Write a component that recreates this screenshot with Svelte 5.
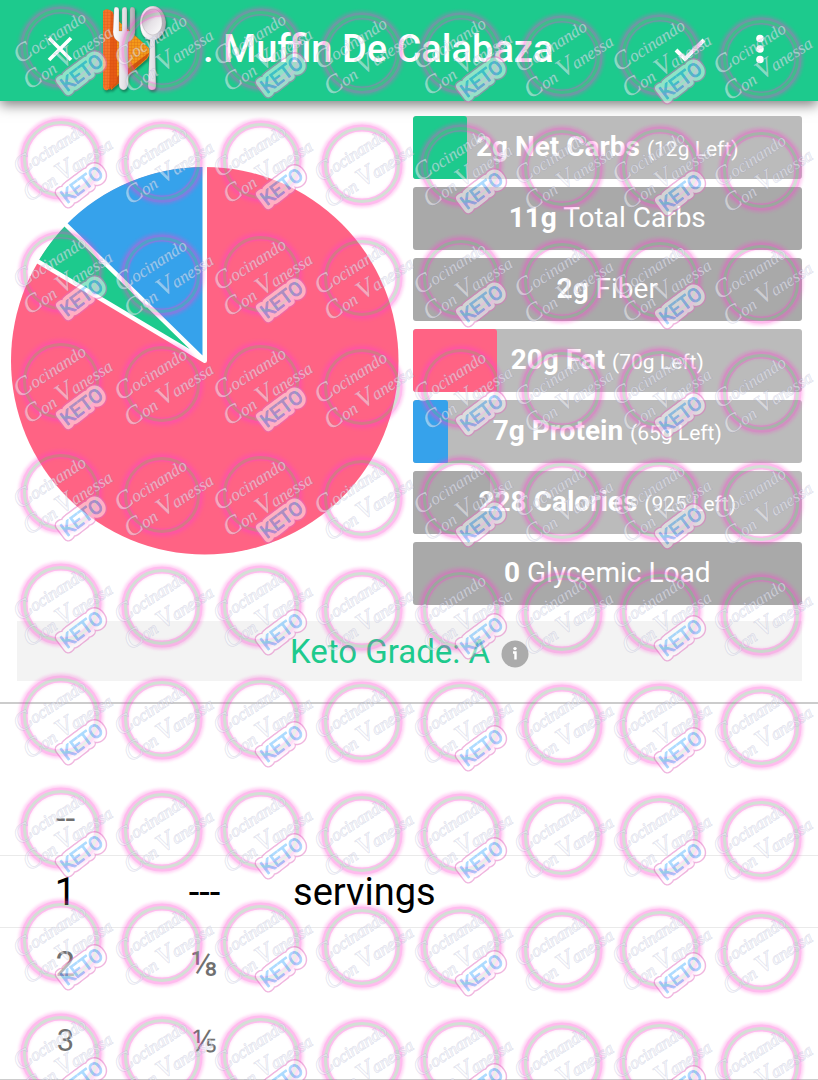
<script>
  const bars = [
    { amount: '2g Net Carbs', note: '(12g Left)', fill: 13.9, color: '#1dca8d' },
    { amount: '11g', label: 'Total Carbs' },
    { amount: '2g', label: 'Fiber' },
    { amount: '20g Fat', note: '(70g Left)', fill: 21.8, color: '#ff6384' },
    { amount: '7g Protein', note: '(65g Left)', fill: 9.2, color: '#36a2eb' },
    { amount: '228 Calories', note: '(925 Left)', fill: 19.8, color: '#a9a9a9' },
    { amount: '0', label: 'Glycemic Load' }
  ];

  const wheel = [
    { whole: '--', part: '', unit: '', size: 'near' },
    { whole: '1', part: '---', unit: 'servings', size: 'current' },
    { whole: '2', part: '⅛', unit: '', size: 'near' },
    { whole: '3', part: '⅕', unit: '', size: 'far' }
  ];

  const columns = [[61, 0], [162, 3], [261, 2], [362, 6], [461, 6], [562, 9], [660, 8], [761, 11]];
  const rows = [47, 159, 272, 381, 492, 604, 716, 828, 941, 1054];
  const marks = rows.flatMap((y) => columns.map(([x, dy], i) => ({ x, y: y + dy, keto: i % 2 === 0 })));
</script>

<div class="page">
  <header>
    <button class="icon close" aria-label="Close">
      <svg width="30" height="30" viewBox="0 0 30 30"><path d="M4 4L26 26M26 4L4 26" fill="none" stroke="#fff" stroke-width="3.6" /></svg>
    </button>
    <svg class="food" width="66" height="86" viewBox="0 0 66 86" aria-hidden="true">
      <defs>
        <linearGradient id="metal" x1="0" x2="1"><stop offset="0" stop-color="#fff" /><stop offset=".5" stop-color="#e4e1e6" /><stop offset="1" stop-color="#aaa6ad" /></linearGradient>
        <linearGradient id="bowl" x1="0" x2="1" y2="1"><stop offset="0" stop-color="#aaa7ac" /><stop offset=".5" stop-color="#e6e2e7" /><stop offset="1" stop-color="#fff" /></linearGradient>
        <pattern id="weave" width="3" height="3" patternUnits="userSpaceOnUse"><path d="M0 0H3M0 0V3" stroke="#c9450d" stroke-width="1" opacity=".4" /></pattern>
      </defs>
      <path d="M6 5L48 42Q50 48 46 53L10 84Z" fill="#f39a19" />
      <path d="M46 52L10 84L13 73L49 46Z" fill="#ce570f" />
      <path d="M2 5Q6 1 12 6V76L7 84Q2 85 2 80Z" fill="#f3752a" />
      <path d="M10 6L16 11V76L8 84Z" fill="#e65a14" />
      <path d="M2 5Q6 1 12 6L48 42L46 53L10 84L2 80Z" fill="url(#weave)" />
      <g stroke="#77727a" stroke-opacity=".35" stroke-width=".7">
        <path d="M13 4Q13 1 15 1Q18 1 18 4V25H21V4Q21 1 24 1Q26 1 26 4V25H29V4Q29 1 31 1Q34 1 34 4V27Q33 34 27 36V79Q26 84 22 84Q18 83 18 79V36Q12 33 12 26Z" fill="url(#metal)" />
        <path d="M52 0C44 0 39 8 39 17C39 27 43 33 49 34L47 80Q47 84 51 84Q55 84 55 80L54 34C61 31 65 25 65 16C64 7 59 0 52 0Z" fill="url(#metal)" />
        <path d="M52 3C45 3 41 10 41 17C42 24 47 29 52 29C58 28 62 22 61 15C61 8 57 3 52 3Z" fill="url(#bowl)" />
      </g>
    </svg>
    <h1>. Muffin De Calabaza</h1>
    <button class="icon" aria-label="Save">
      <svg width="34" height="30" viewBox="0 0 34 30"><path d="M3 16L12 25L31 6" fill="none" stroke="#fff" stroke-width="4" /></svg>
    </button>
    <button class="icon more" aria-label="More options">
      <svg width="10" height="30" viewBox="0 0 10 30" fill="#fff"><circle cx="5" cy="4.5" r="3.8" /><circle cx="5" cy="15" r="3.8" /><circle cx="5" cy="25.5" r="3.8" /></svg>
    </button>
  </header>

  <main>
    <section class="nutrition">
      <svg class="pie" viewBox="0 0 390 390" role="img" aria-label="Macronutrient chart">
        <circle cx="195" cy="195" r="194" fill="#ff6384" />
        <path d="M195 195L28 96A194 194 0 0 1 56 59Z" fill="#1dca8d" />
        <path d="M195 195L56 59A194 194 0 0 1 195 1Z" fill="#36a2eb" />
        <path d="M195 0V195L27 95M195 195L54 57" fill="none" stroke="#fff" stroke-width="4.5" stroke-linejoin="round" />
      </svg>
      <ul class="bars">
        {#each bars as bar}
          <li class:progress={bar.fill}>
            {#if bar.fill}<span class="fill" style="width: {bar.fill}%; background: {bar.color}"></span>{/if}
            <span class="text"><b>{bar.amount}</b> {#if bar.note}<small>{bar.note}</small>{:else}{bar.label}{/if}</span>
          </li>
        {/each}
      </ul>
    </section>

    <button class="grade">
      <span>Keto Grade: A</span>
      <svg width="28" height="28" viewBox="0 0 28 28" aria-hidden="true"><circle cx="14" cy="14" r="13.5" fill="#ababab" /><circle cx="14" cy="8.6" r="1.7" fill="#fff" /><path d="M12 12.5H14.5V19.5" fill="none" stroke="#fff" stroke-width="2.4" /></svg>
    </button>

    <section class="wheel">
      {#each wheel as row}
        <div class="row {row.size}">
          <span>{row.whole}</span><span>{row.part}</span><span class="unit">{row.unit}</span>
        </div>
      {/each}
    </section>
  </main>

  <svg class="marks" viewBox="0 0 818 1080" preserveAspectRatio="xMidYMin slice" aria-hidden="true">
    <defs>
      <filter id="glow" x="-20%" y="-20%" width="140%" height="140%"><feGaussianBlur stdDeviation="1.6" /></filter>
    </defs>
    {#each marks as mark}
      <g transform="translate({mark.x} {mark.y})">
        <g class="ring">
          <circle r="38" stroke="#ff40d0" stroke-width="9" opacity=".7" filter="url(#glow)" />
          <circle r="37" stroke="#ff40d0" stroke-width="7" />
          <circle r="36.5" stroke="#82a488" stroke-width="3" />
        </g>
        <g class="script" transform="rotate(-33)">
          <text x="-44" y="-8"><tspan class="cap">C</tspan>ocinando</text>
          <text x="-50" y="19"><tspan class="cap">C</tspan>on <tspan class="cap">V</tspan>anessa</text>
        </g>
        {#if mark.keto}
          <g class="keto" transform="translate(6 45) rotate(-37)">
            <text class="edge">KETO</text>
            <text class="halo">KETO</text>
            <text class="core">KETO</text>
          </g>
        {/if}
      </g>
    {/each}
  </svg>
</div>

<style>
  :global(body) { background: #fff; }
  .page {
    position: relative;
    overflow: hidden;
    font-family: Roboto, "Liberation Sans", sans-serif;
    color: #000;
  }
  button { border: 0; margin: 0; padding: 0; font: inherit; background: none; cursor: pointer; }
  header {
    display: flex;
    align-items: center;
    height: 101px;
    box-sizing: border-box;
    padding: 0 53px 3px 45px;
    background: #1dca8d;
    box-shadow: 0 4px 12px rgba(0, 0, 0, .5);
  }
  .icon { display: flex; flex: none; }
  .close { margin-right: 26px; }
  .more { margin-left: 48px; }
  .food { flex: none; margin-right: 36px; filter: drop-shadow(1px 2px 1px rgba(0, 0, 0, .35)); }
  h1 {
    flex: 1;
    margin: 0;
    font-size: 38px;
    line-height: 48px;
    font-weight: 500;
    color: #fff;
    white-space: nowrap;
  }
  .nutrition {
    display: grid;
    grid-template-columns: 1fr 1fr;
    gap: 13px;
    align-items: center;
    padding: 15px 16px 16px 10px;
  }
  .pie { display: block; width: 100%; }
  .bars { display: flex; flex-direction: column; gap: 8px; margin: 0; padding: 0; list-style: none; }
  li {
    display: grid;
    height: 63px;
    border-radius: 3px;
    overflow: hidden;
    background: #a9a9a9;
    color: #fff;
    font-size: 28px;
    line-height: 62px;
    text-align: center;
    white-space: nowrap;
  }
  .progress { background: #bbb; }
  .fill, .text { grid-area: 1 / 1; }
  .fill { border-radius: 3px; }
  small { font-size: 21px; }
  .grade {
    display: flex;
    align-items: center;
    justify-content: center;
    gap: 11px;
    width: calc(100% - 33px);
    height: 60px;
    margin: 0 16px 21px 17px;
    background: #f3f3f3;
    color: #1dca8d;
    font-size: 33px;
  }
  .grade svg { margin-top: 5px; }
  .wheel { padding-top: 78px; border-top: 2px solid #ccc; border-bottom: 1px solid #ccc; }
  .row {
    display: grid;
    grid-template-columns: 16% 18% 1fr;
    align-items: center;
    height: 73px;
    text-align: center;
    color: #707070;
    box-sizing: border-box;
  }
  .current { border-top: 1px solid #eaeaea; border-bottom: 1px solid #eaeaea; color: #000; font-size: 38px; }
  .near { font-size: 35px; }
  .wheel .far { height: 78px; font-size: 31px; }
  .unit { padding-left: 15px; text-align: left; }
  .marks { position: absolute; top: 0; left: 0; width: 100%; height: 100%; pointer-events: none; }
  .ring { fill: none; opacity: .35; }
  .script {
    font: italic 17px "Liberation Serif", serif;
    fill: #fff;
    fill-opacity: .45;
    stroke: #8c90bd;
    stroke-opacity: .28;
    stroke-width: 1px;
    paint-order: stroke;
  }
  .cap { font-size: 26px; }
  .keto { font: 19px Roboto, sans-serif; stroke-linejoin: round; opacity: .5; }
  .edge { fill: none; stroke: #e26fc0; stroke-width: 11px; }
  .halo { fill: none; stroke: #fff; stroke-width: 8px; }
  .core { fill: #5cb8ff; stroke: #5cb8ff; stroke-width: 1px; }
</style>
